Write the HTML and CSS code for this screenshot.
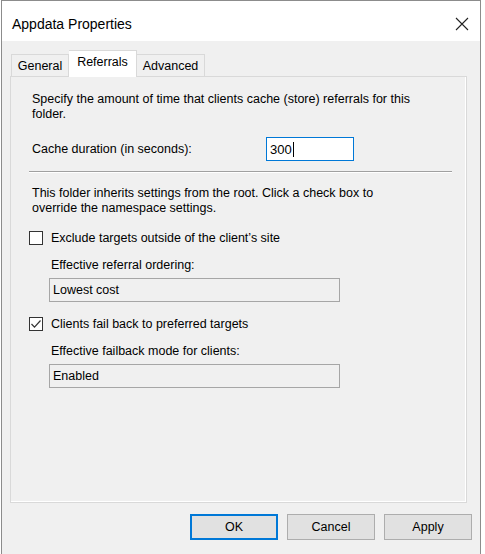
FILE: index.html
```html
<!DOCTYPE html>
<html>
<head>
<meta charset="utf-8">
<link rel="stylesheet" href="styles.css">
</head>
<body>
<div class="window">
  <div class="titlebar">
    <span class="title">Appdata Properties</span>
    <svg class="close" width="14" height="14" viewBox="0 0 14 14"><path d="M1 1 L13 13 M13 1 L1 13" stroke="#222" stroke-width="1.1" fill="none"/></svg>
  </div>
  <div class="tabs">
    <div class="tab">General</div>
    <div class="tab active">Referrals</div>
    <div class="tab wide">Advanced</div>
  </div>
  <div class="panel">
    <p class="para first">Specify the amount of time that clients cache (store) referrals for this folder.</p>
    <div class="cache-row">
      <span class="cache-label">Cache duration (in seconds):</span>
      <div class="input">300<span class="caret"></span></div>
    </div>
    <div class="sep"></div>
    <p class="para second">This folder inherits settings from the root. Click a check box to override the namespace settings.</p>
    <div class="cb-row">
      <span class="cb"></span>
      <span class="cb-label">Exclude targets outside of the client’s site</span>
    </div>
    <div class="sub-label">Effective referral ordering:</div>
    <div class="ro-box">Lowest cost</div>
    <div class="cb-row">
      <span class="cb"><svg width="12" height="12" viewBox="0 0 12 12"><path d="M1.5 6 L4.5 9.2 L10.5 2.5" stroke="#333" stroke-width="1.2" fill="none"/></svg></span>
      <span class="cb-label">Clients fail back to preferred targets</span>
    </div>
    <div class="sub-label second-sub">Effective failback mode for clients:</div>
    <div class="ro-box">Enabled</div>
  </div>
  <div class="buttons">
    <div class="btn default">OK</div>
    <div class="btn">Cancel</div>
    <div class="btn">Apply</div>
  </div>
</div>
</body>
</html>
```
FILE: styles.css
```css
html, body {
  margin: 0;
  padding: 0;
  background: #ffffff;
}
body {
  font-family: "Liberation Sans", Arial, sans-serif;
  font-size: 12.5px;
  color: #000;
}
.window {
  margin-left: 1px;
  width: 478px;
  height: 553px;
  border: 1px solid #8c8c8c;
  border-bottom: none;
  background: #f0f0f0;
  display: flex;
  flex-direction: column;
}
.titlebar {
  height: 40px;
  background: #ffffff;
  display: flex;
  align-items: center;
  justify-content: space-between;
  padding: 0 11px 0 10px;
  flex: none;
}
.title {
  font-size: 14px;
  padding-top: 6px;
}
.close {
  margin-top: 6px;
}
.tabs {
  display: flex;
  align-items: flex-end;
  height: 26px;
  margin: 9px 0 0 9px;
  flex: none;
}
.tab {
  box-sizing: border-box;
  width: 58px;
  height: 22px;
  border: 1px solid #d9d9d9;
  border-bottom: none;
  background: #f0f0f0;
  display: flex;
  align-items: center;
  justify-content: center;
  padding-top: 1px;
}
.tab.wide {
  width: 68px;
  border-left: none;
}
.tab.active {
  width: 68px;
  background: #ffffff;
  border-left: none;
  align-items: flex-start;
  padding-top: 4px;
  position: relative;
  z-index: 1;
  margin-bottom: -1px;
  height: 27px;
}
.panel {
  box-sizing: border-box;
  margin-left: 8px;
  width: 457px;
  height: 427px;
  border: 1px solid #d9d9d9;
  box-shadow: inset -1px -1px 0 #ffffff;
  background: #f0f0f0;
  padding-left: 18px;
  flex: none;
}
.para {
  margin: 0;
  padding-left: 3px;
  line-height: 15px;
}
.para.first {
  margin-top: 15px;
  width: 400px;
}
.para.second {
  margin-top: 13px;
  width: 360px;
}
.cache-row {
  margin-top: 15px;
  height: 24px;
  display: flex;
  align-items: center;
  padding-left: 3px;
}
.cache-label {
  width: 234px;
}
.input {
  box-sizing: border-box;
  width: 88px;
  height: 24px;
  border: 1px solid #0078d7;
  background: #ffffff;
  font-size: 13px;
  display: flex;
  align-items: center;
  padding-left: 3px;
}
.caret {
  display: inline-block;
  width: 1px;
  height: 15px;
  background: #000;
  margin-left: 1px;
}
.sep {
  margin-top: 10px;
  width: 423px;
  height: 1px;
  background: #a0a0a0;
  border-bottom: 1px solid #ffffff;
}
.cb-row {
  margin-top: 14px;
  height: 16px;
  display: flex;
  align-items: center;
}
.cb {
  box-sizing: border-box;
  width: 14px;
  height: 14px;
  border: 1px solid #333333;
  background: #ffffff;
  display: flex;
  align-items: center;
  justify-content: center;
  flex: none;
}
.cb-label {
  margin-left: 8px;
}
.sub-label {
  margin-top: 12px;
  padding-left: 22px;
  line-height: 15px;
}
.ro-box {
  box-sizing: border-box;
  margin-top: 5px;
  margin-left: 20px;
  width: 291px;
  height: 24px;
  border: 1px solid #a6a6a6;
  background: #f0f0f0;
  display: flex;
  align-items: center;
  padding-left: 3px;
}
.buttons {
  display: flex;
  justify-content: flex-end;
  gap: 9px;
  margin-top: 11px;
  padding-right: 8px;
}
.btn {
  box-sizing: border-box;
  width: 88px;
  height: 26px;
  border: 1px solid #adadad;
  background: #e1e1e1;
  display: flex;
  align-items: center;
  justify-content: center;
  font-size: 12.5px;
}
.btn.default {
  border: 2px solid #0078d7;
}
```
